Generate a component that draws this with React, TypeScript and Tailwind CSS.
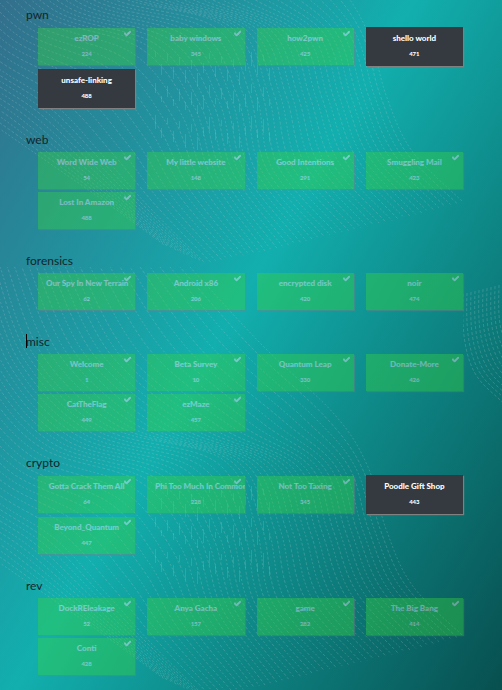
import { FaCheck } from "react-icons/fa";

type Challenge = { name: string; value: number; open?: boolean };
type Category = { title: string; caret?: boolean; items: Challenge[] };
type Point = [number, number];

const categories: Category[] = [
  {
    title: "pwn",
    items: [
      { name: "ezROP", value: 224 },
      { name: "baby windows", value: 345 },
      { name: "how2pwn", value: 425 },
      { name: "shello world", value: 471, open: true },
      { name: "unsafe-linking", value: 488, open: true },
    ],
  },
  {
    title: "web",
    items: [
      { name: "Word Wide Web", value: 54 },
      { name: "My little website", value: 148 },
      { name: "Good Intentions", value: 291 },
      { name: "Smuggling Mail", value: 423 },
      { name: "Lost In Amazon", value: 488 },
    ],
  },
  {
    title: "forensics",
    items: [
      { name: "Our Spy In New Terrain", value: 62 },
      { name: "Android x86", value: 206 },
      { name: "encrypted disk", value: 420 },
      { name: "noir", value: 474 },
    ],
  },
  {
    title: "misc",
    caret: true,
    items: [
      { name: "Welcome", value: 1 },
      { name: "Beta Survey", value: 10 },
      { name: "Quantum Leap", value: 330 },
      { name: "Donate-More", value: 426 },
      { name: "CatTheFlag", value: 449 },
      { name: "ezMaze", value: 457 },
    ],
  },
  {
    title: "crypto",
    items: [
      { name: "Gotta Crack Them All", value: 64 },
      { name: "Phi Too Much In Common", value: 228 },
      { name: "Not Too Taxing", value: 345 },
      { name: "Poodle Gift Shop", value: 443, open: true },
      { name: "Beyond_Quantum", value: 447 },
    ],
  },
  {
    title: "rev",
    items: [
      { name: "DockREleakage", value: 52 },
      { name: "Anya Gacha", value: 157 },
      { name: "game", value: 282 },
      { name: "The Big Bang", value: 414 },
      { name: "Conti", value: 428 },
    ],
  },
];

// Guide curves of the dashed mesh, from its right edge to its lower left edge.
const guides: Point[][] = [
  [[190, 0], [262, 78], [335, 148], [368, 200], [386, 262], [412, 318], [463, 369]],
  [[80, 0], [130, 90], [220, 160], [298, 200], [322, 265], [345, 328], [398, 386]],
  [[0, 0], [35, 90], [110, 160], [222, 192], [256, 260], [272, 335], [330, 402]],
  [[-50, 20], [-20, 110], [40, 180], [140, 215], [188, 275], [212, 345], [265, 418]],
  [[-110, 80], [-70, 160], [-15, 225], [55, 272], [105, 325], [150, 375], [205, 430]],
  [[-170, 180], [-120, 220], [-70, 255], [-15, 292], [40, 328], [95, 364], [160, 410]],
];

function smooth(points: Point[]): string {
  let d = `M${points[0][0]} ${points[0][1]}`;
  for (let i = 0; i < points.length - 1; i++) {
    const p0 = points[Math.max(i - 1, 0)];
    const p1 = points[i];
    const p2 = points[i + 1];
    const p3 = points[Math.min(i + 2, points.length - 1)];
    d += `C${p1[0] + (p2[0] - p0[0]) / 6} ${p1[1] + (p2[1] - p0[1]) / 6} ${p2[0] - (p3[0] - p1[0]) / 6} ${p2[1] - (p3[1] - p1[1]) / 6} ${p2[0]} ${p2[1]}`;
  }
  return d;
}

const perGuide = 11;
const mesh: string[] = [];
for (let g = 0; g < guides.length - 1; g++) {
  for (let k = 0; k < perGuide; k++) {
    const t = k / perGuide;
    mesh.push(
      smooth(
        guides[g].map((p, i): Point => {
          const q = guides[g + 1][i];
          return [p[0] + (q[0] - p[0]) * t, p[1] + (q[1] - p[1]) * t];
        })
      )
    );
  }
}

// Longer, nearly upright dashes where the mesh drops: x, y, length.
const drops = Array.from({ length: 60 }, (_, i) => {
  const column = i % 20;
  const row = Math.floor(i / 20);
  return [155 + column * 6, 218 + row * 32 + ((column * 13) % 23), 6 + ((column * 5 + row * 4) % 9)];
});

const edgeArcs = Array.from({ length: 12 }, (_, i) => {
  const x = 463 + i * 4;
  return `M${x} ${294 - i}C${x - 1} 320 ${x} ${345 - i * 2} ${x + 8} ${365 - i * 2}S${x + 28} ${390 - i * 2} ${x + 42} ${405 - i * 2}`;
});

function Mesh({ y }: { y: number }) {
  return (
    <g transform={`translate(0 ${y})`}>
      {mesh.map((d, i) => (
        <path key={i} d={d} strokeDasharray={i % 2 ? "3 2" : "2 2"} strokeDashoffset={(i * 7) % 5} />
      ))}
      {drops.map(([x, top, length]) => (
        <path key={`${x}-${top}`} d={`M${x}.5 ${top}v${length}`} strokeOpacity="0.25" />
      ))}
    </g>
  );
}

function Waves() {
  return (
    <svg
      aria-hidden="true"
      className="pointer-events-none absolute inset-0 h-full w-full"
      fill="none"
      stroke="#b4cdcd"
      strokeOpacity="0.3"
      strokeWidth="0.8"
    >
      <Mesh y={-167} />
      <Mesh y={267} />
      <clipPath id="edge">
        <rect x="463" y="270" width="60" height="150" />
      </clipPath>
      <g clipPath="url(#edge)">
        {edgeArcs.map((d) => (
          <path key={d} d={d} strokeDasharray="3 2" />
        ))}
      </g>
    </svg>
  );
}

function Card({ item }: { item: Challenge }) {
  return (
    <button
      type="button"
      className={
        "relative block w-full overflow-hidden px-2 font-black text-white shadow-[1px_1px_1px_#808080] " +
        (item.open ? "bg-[#343a40] pt-[5px] pb-[6px]" : "bg-[#37d63e] pt-1 pb-[5px] opacity-40")
      }
    >
      {!item.open && (
        <FaCheck className="absolute top-[2px] right-1 size-[7px] stroke-white" strokeWidth={50} />
      )}
      <span className="mb-1 flex h-3 justify-center-safe text-[8px] leading-3 whitespace-nowrap">
        {item.name}
      </span>
      <span className="block h-3 text-[6px] leading-3">{item.value}</span>
    </button>
  );
}

export default function App() {
  return (
    <main className="relative min-h-screen overflow-hidden bg-[linear-gradient(120deg,#336f8c_0%,#12afae_46%,#084f4f_100%)] pb-4 font-['Lato',sans-serif]">
      <Waves />
      <div className="relative flex flex-col gap-5 px-[26px] pt-[3px]">
        {categories.map((category) => (
          <section key={category.title}>
            <h2 className="relative h-6 text-[12px] leading-6 text-[#12262c]">
              {category.caret && <span className="absolute top-1 left-0 h-[14px] w-px bg-black" />}
              {category.title}
            </h2>
            <div className="grid grid-cols-4 items-center gap-x-3 gap-y-[3px] pr-[13px] pl-3">
              {category.items.map((item) => (
                <Card key={item.name} item={item} />
              ))}
            </div>
          </section>
        ))}
      </div>
    </main>
  );
}
